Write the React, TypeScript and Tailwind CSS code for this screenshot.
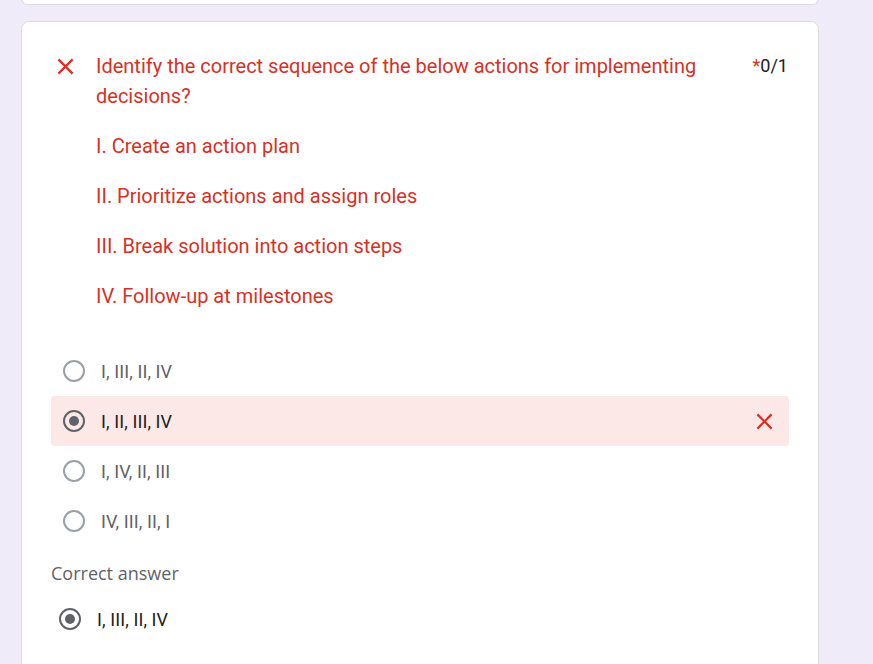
import React from "react";

const steps = [
  "I. Create an action plan",
  "II. Prioritize actions and assign roles",
  "III. Break solution into action steps",
  "IV. Follow-up at milestones",
];

const options = ["I, III, II, IV", "I, II, III, IV", "I, IV, II, III", "IV, III, II, I"];
const chosen = 1;

function Cross({ className }: { className?: string }) {
  return (
    <svg viewBox="0 0 18 18" className={className} fill="none" stroke="currentColor" strokeWidth="2.4">
      <path d="M1.5 1.5 L16.5 16.5 M16.5 1.5 L1.5 16.5" />
    </svg>
  );
}

function Radio({ checked }: { checked: boolean }) {
  return (
    <div
      className={`w-[22px] h-[22px] rounded-full border-2 flex items-center justify-center shrink-0 ${
        checked ? "border-[#5f6368]" : "border-[#9aa0a6]"
      }`}
    >
      {checked && <div className="w-[10px] h-[10px] rounded-full bg-[#5f6368]" />}
    </div>
  );
}

export default function App() {
  return (
    <div className="min-h-[664px] bg-[#f0ebf8] font-['Roboto',sans-serif] overflow-hidden">
      {/* previous card, mostly scrolled away */}
      <div className="ml-[22px] w-[796px] h-[5px] bg-white border border-t-0 border-[#dadce0] rounded-b-lg" />

      <div className="ml-[21px] mt-[16px] w-[798px] bg-white border border-[#dadce0] rounded-lg pt-[29px] pb-10">
        {/* Question header */}
        <div className="flex pl-[35px] pr-[30px]">
          <div className="h-[30px] flex items-center shrink-0">
            <Cross className="w-[17px] h-[17px] text-[#d93025]" />
          </div>
          <div className="flex-1 ml-[22px] mr-4 text-[20px] leading-[30px] text-[#d93025]">
            Identify the correct sequence of the below actions for implementing decisions?
          </div>
          <div className="shrink-0 text-[18px] leading-[30px] text-[#202124]">
            <span className="text-[#d93025]">*</span>0/1
          </div>
        </div>

        {/* Steps */}
        <div className="mt-[10px] pl-[74px]">
          {steps.map((s) => (
            <div key={s} className="h-[50px] flex items-center text-[20px] text-[#d93025]">
              {s}
            </div>
          ))}
        </div>

        {/* Options */}
        <div className="mt-[25px] mx-[29px]">
          {options.map((o, i) => (
            <div
              key={o}
              className={`h-[50px] flex items-center pl-3 pr-4 rounded ${i === chosen ? "bg-[#fce8e6]" : ""}`}
            >
              <Radio checked={i === chosen} />
              <span
                className={`ml-4 text-[18px] tracking-[0.1px] ${i === chosen ? "text-[#202124]" : "text-[#5f6368]"}`}
              >
                {o}
              </span>
              {i === chosen && <Cross className="ml-auto w-[17px] h-[17px] text-[#d93025]" />}
            </div>
          ))}
        </div>

        {/* Correct answer */}
        <div className="mt-[15px] mx-[29px] text-[18px] leading-[24px] font-medium text-[#5f6368] font-['Open_Sans',sans-serif]">
          Correct answer
        </div>
        <div className="mt-[14px] mx-[29px] h-10 flex items-center pl-2">
          <Radio checked />
          <span className="ml-4 text-[18px] tracking-[0.1px] text-[#202124]">I, III, II, IV</span>
        </div>
      </div>
    </div>
  );
}
